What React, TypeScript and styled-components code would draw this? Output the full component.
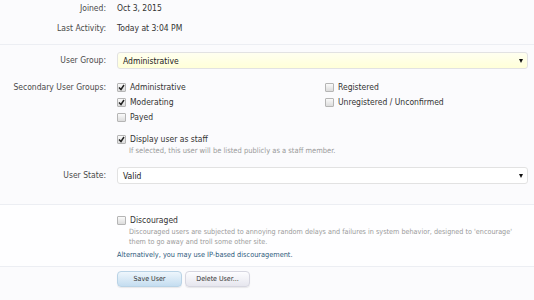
import React from 'react'
import styled, { createGlobalStyle } from 'styled-components'

const GlobalStyle = createGlobalStyle`
  html, body {
    margin: 0;
    padding: 0;
    background: #fbfbfd;
  }
  body {
    font-family: 'DejaVu Sans Condensed', 'DejaVu Sans', sans-serif;
    font-size: 8.5px;
    color: #333;
  }
`

const Page = styled.div`
  width: 534px;
  height: 300px;
  padding-top: 1px;
  box-sizing: border-box;
  overflow: hidden;
`

const Section = styled.div<{ $white?: boolean; $pad?: string }>`
  padding: ${({ $pad }) => $pad || '0'};
  background: ${({ $white }) => ($white ? '#fefeff' : 'transparent')};
  border-bottom: 1px solid #eceef3;
`

const Row = styled.div<{ $mt?: number }>`
  display: grid;
  grid-template-columns: 106px 1fr;
  column-gap: 11px;
  margin-top: ${({ $mt }) => $mt || 0}px;
  padding-right: 6px;
`

const Label = styled.div<{ $tall?: boolean }>`
  text-align: right;
  color: #4a4a4a;
  line-height: ${({ $tall }) => ($tall ? 17 : 14)}px;
  white-space: nowrap;
`

const Value = styled.div`
  line-height: 14px;
  color: #333;
`

const Select = styled.div<{ $highlight?: boolean }>`
  display: flex;
  align-items: center;
  justify-content: space-between;
  height: 17px;
  box-sizing: border-box;
  padding: 0 4px 0 5px;
  border: 1px solid #e2e2e2;
  border-radius: 3px;
  background: ${({ $highlight }) =>
    $highlight ? 'linear-gradient(#fffff0, #ffffd8)' : '#fff'};
  color: #222;
`

const Arrow = styled.span`
  width: 0;
  height: 0;
  border-left: 2.5px solid transparent;
  border-right: 2.5px solid transparent;
  border-top: 4px solid #111;
`

const CheckGrid = styled.div`
  display: grid;
  grid-template-columns: 208px 1fr;
  row-gap: 1px;
`

const Check = styled.label`
  display: flex;
  align-items: center;
  gap: 4px;
  height: 14px;
  color: #333;
`

const Box = styled.span`
  width: 7px;
  height: 7px;
  border: 1px solid #b5b5b5;
  border-radius: 1px;
  background: linear-gradient(#fafafa, #dcdcdc);
  display: inline-flex;
  align-items: center;
  justify-content: center;
  flex: none;
`

const Hint = styled.div<{ $size?: number }>`
  color: #9a9a9a;
  font-size: ${({ $size }) => $size || 7.5}px;
  line-height: 10px;
  padding-left: 12px;
  white-space: nowrap;
`

const AltLink = styled.div`
  color: #2d5a7b;
  font-size: 7.3px;
  line-height: 10px;
  margin-top: 3px;
`

const Buttons = styled.div`
  display: flex;
  gap: 3px;
`

const Button = styled.button<{ $primary?: boolean }>`
  font-family: inherit;
  font-size: 7px;
  color: #333;
  height: 16px;
  padding: 0;
  width: 65px;
  border: 1px solid ${({ $primary }) => ($primary ? '#b9d3e6' : '#d6d6e0')};
  border-radius: 4px;
  background: ${({ $primary }) =>
    $primary ? 'linear-gradient(#eef6fc, #c4ddf0)' : 'linear-gradient(#fdfdff, #e6e6ee)'};
  box-shadow: 0 1px 1px rgba(0, 0, 0, 0.08);
`

const CheckBox = ({ checked, children }: { checked?: boolean; children: React.ReactNode }) => (
  <Check>
    <Box>
      {checked && (
        <svg width="7" height="7" viewBox="0 0 7 7">
          <path d="M1 3.5 L3 5.5 L6 1" fill="none" stroke="#222" strokeWidth="1.5" />
        </svg>
      )}
    </Box>
    {children}
  </Check>
)

export default function App() {
  return (
    <Page>
      <GlobalStyle />
      <Section $pad="0 0 9px">
        <Row>
          <Label>Joined:</Label>
          <Value>Oct 3, 2015</Value>
        </Row>
        <Row $mt={6}>
          <Label>Last Activity:</Label>
          <Value>Today at 3:04 PM</Value>
        </Row>
      </Section>
      <Section $pad="7px 0 20px">
        <Row>
          <Label $tall>User Group:</Label>
          <Select $highlight>
            Administrative
            <Arrow />
          </Select>
        </Row>
        <Row $mt={11}>
          <Label>Secondary User Groups:</Label>
          <CheckGrid>
            <CheckBox checked>Administrative</CheckBox>
            <CheckBox>Registered</CheckBox>
            <CheckBox checked>Moderating</CheckBox>
            <CheckBox>Unregistered / Unconfirmed</CheckBox>
            <CheckBox>Payed</CheckBox>
          </CheckGrid>
        </Row>
        <Row $mt={8}>
          <Label />
          <div>
            <CheckBox checked>Display user as staff</CheckBox>
            <Hint>If selected, this user will be listed publicly as a staff member.</Hint>
          </div>
        </Row>
        <Row $mt={11}>
          <Label $tall>User State:</Label>
          <Select>
            Valid
            <Arrow />
          </Select>
        </Row>
      </Section>
      <Section $white $pad="8px 0 6px">
        <Row>
          <Label />
          <div>
            <CheckBox>Discouraged</CheckBox>
            <Hint $size={7.2}>
              Discouraged users are subjected to annoying random delays and failures in system behavior, designed to 'encourage'
              <br />
              them to go away and troll some other site.
            </Hint>
            <AltLink>Alternatively, you may use IP-based discouragement.</AltLink>
          </div>
        </Row>
      </Section>
      <Row $mt={4}>
        <Label />
        <Buttons>
          <Button $primary>Save User</Button>
          <Button>Delete User...</Button>
        </Buttons>
      </Row>
    </Page>
  )
}
